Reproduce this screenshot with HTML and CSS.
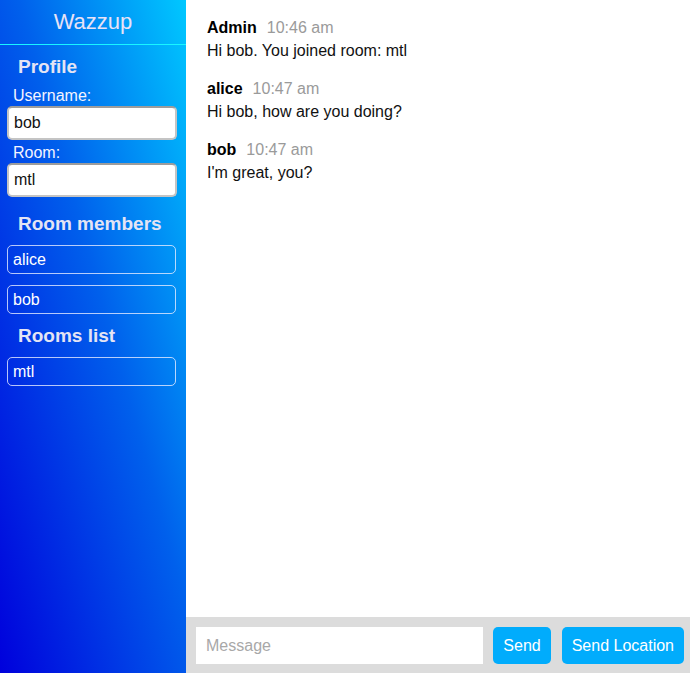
FILE: index.html
```html
<!DOCTYPE html>
<html lang="en">
<head>
<meta charset="utf-8">
<title>Wazzup</title>
<link rel="stylesheet" href="styles.css">
</head>
<body>
<div class="app">
  <aside class="sidebar">
    <div class="brand">Wazzup</div>
    <div class="side-body">
      <h2 class="side-heading side-heading--first">Profile</h2>
      <label class="field-label field-label--first" for="username">Username:</label>
      <input class="field-input" id="username" type="text" value="bob">
      <label class="field-label" for="room">Room:</label>
      <input class="field-input" id="room" type="text" value="mtl">
      <h2 class="side-heading">Room members</h2>
      <ul class="pill-list">
        <li class="pill">alice</li>
        <li class="pill">bob</li>
      </ul>
      <h2 class="side-heading side-heading--tight">Rooms list</h2>
      <ul class="pill-list">
        <li class="pill">mtl</li>
      </ul>
    </div>
  </aside>
  <main class="chat">
    <div class="messages">
      <div class="message">
        <div class="meta"><span class="name">Admin</span><span class="time">10:46 am</span></div>
        <div class="text">Hi bob. You joined room: mtl</div>
      </div>
      <div class="message">
        <div class="meta"><span class="name">alice</span><span class="time">10:47 am</span></div>
        <div class="text">Hi bob, how are you doing?</div>
      </div>
      <div class="message">
        <div class="meta"><span class="name">bob</span><span class="time">10:47 am</span></div>
        <div class="text">I'm great, you?</div>
      </div>
    </div>
    <form class="composer">
      <input class="composer-input" type="text" placeholder="Message">
      <button class="btn" type="button">Send</button>
      <button class="btn btn--wide" type="button">Send Location</button>
    </form>
  </main>
</div>
</body>
</html>
```
FILE: styles.css
```css
* { box-sizing: border-box; }
html, body { margin: 0; padding: 0; height: 100%; }
body {
  font-family: "Liberation Sans", Arial, Helvetica, sans-serif;
  font-size: 16px;
  color: #111;
  background: #fff;
}
.app {
  display: flex;
  height: 100vh;
}
.sidebar {
  width: 186px;
  flex: 0 0 186px;
  background: linear-gradient(to top right, #0000dc 0%, #0060ec 55%, #00c8ff 100%);
  display: flex;
  flex-direction: column;
}
.brand {
  height: 45px;
  border-bottom: 1px solid #19f5ff;
  color: #e8e2f6;
  font-size: 22px;
  line-height: 43px;
  text-align: center;
}
.side-body {
  padding: 0 9px 0 7px;
}
.side-heading {
  margin: 16px 0 0 11px;
  font-size: 19px;
  line-height: 22px;
  font-weight: bold;
  color: #e4e4f4;
}
.side-heading--first { margin-top: 11px; }
.side-heading--tight { margin-top: 11px; }
.field-label {
  display: block;
  margin: 4px 0 0 6px;
  color: #f4f4ff;
  line-height: 18px;
}
.field-label--first { margin-top: 9px; }
.field-input {
  display: block;
  width: 170px;
  height: 34px;
  margin-top: 1px;
  padding: 0 5px;
  border: 2px solid #c4c4c4;
  border-top-color: #9c9c9c;
  border-radius: 5px;
  font-family: inherit;
  font-size: 16px;
  color: #111;
  background: #fff;
  outline: none;
}
.pill-list {
  list-style: none;
  margin: 0;
  padding: 0;
}
.pill {
  width: 169px;
  height: 29px;
  margin-top: 11px;
  padding-left: 5px;
  border: 1px solid rgba(230, 235, 255, 0.8);
  border-radius: 5px;
  color: #fff;
  line-height: 27px;
}
.pill:first-child { margin-top: 10px; }
.chat {
  flex: 1;
  display: flex;
  flex-direction: column;
  min-width: 0;
}
.messages {
  flex: 1;
  padding: 16px 20px 0 21px;
}
.message { margin-bottom: 15px; }
.meta, .text { line-height: 23px; }
.name { font-weight: bold; color: #000; }
.time { color: #9a9a9a; margin-left: 10px; }
.text { color: #111; }
.composer {
  display: flex;
  gap: 10px;
  margin: 0;
  height: 56px;
  padding: 10px 6px 9px 10px;
  background: #dcdcdc;
}
.composer-input {
  flex: 1;
  min-width: 0;
  height: 37px;
  border: none;
  padding: 0 10px;
  font-family: inherit;
  font-size: 16px;
  background: #fff;
  outline: none;
}
.composer-input::placeholder { color: #a8a8a8; }
.btn {
  height: 37px;
  padding: 0 10px;
  border: none;
  border-radius: 5px;
  background: #01acfc;
  color: #fff;
  font-family: inherit;
  font-size: 16px;
}
.btn--wide { margin-left: 1px; }
```
